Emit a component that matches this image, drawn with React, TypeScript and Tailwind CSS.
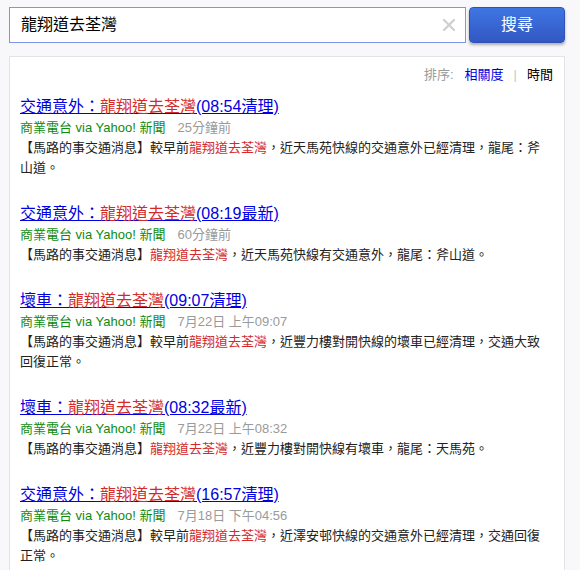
import React from 'react';

interface NewsItem {
  id: number;
  prefix: string;
  suffix: string;
  source: string;
  time: string;
  bodyPre: string;
  bodyPost: string;
}

const KEYWORD = '龍翔道去荃灣';

const items: NewsItem[] = [
  {
    id: 1,
    prefix: '交通意外：',
    suffix: '(08:54清理)',
    source: '商業電台 via Yahoo! 新聞',
    time: '25分鐘前',
    bodyPre: '【馬路的事交通消息】較早前',
    bodyPost: '，近天馬苑快線的交通意外已經清理，龍尾：斧山道。',
  },
  {
    id: 2,
    prefix: '交通意外：',
    suffix: '(08:19最新)',
    source: '商業電台 via Yahoo! 新聞',
    time: '60分鐘前',
    bodyPre: '【馬路的事交通消息】',
    bodyPost: '，近天馬苑快線有交通意外，龍尾：斧山道。',
  },
  {
    id: 3,
    prefix: '壞車：',
    suffix: '(09:07清理)',
    source: '商業電台 via Yahoo! 新聞',
    time: '7月22日 上午09:07',
    bodyPre: '【馬路的事交通消息】較早前',
    bodyPost: '，近豐力樓對開快線的壞車已經清理，交通大致回復正常。',
  },
  {
    id: 4,
    prefix: '壞車：',
    suffix: '(08:32最新)',
    source: '商業電台 via Yahoo! 新聞',
    time: '7月22日 上午08:32',
    bodyPre: '【馬路的事交通消息】',
    bodyPost: '，近豐力樓對開快線有壞車，龍尾：天馬苑。',
  },
  {
    id: 5,
    prefix: '交通意外：',
    suffix: '(16:57清理)',
    source: '商業電台 via Yahoo! 新聞',
    time: '7月18日 下午04:56',
    bodyPre: '【馬路的事交通消息】較早前',
    bodyPost: '，近澤安邨快線的交通意外已經清理，交通回復正常。',
  },
];

const font = { fontFamily: '"Liberation Sans", Arial, "Noto Sans CJK TC", sans-serif' };

const ResultItem: React.FC<{ item: NewsItem }> = ({ item }) => (
  <div className="mb-[25px]">
    <a href="#" className="block text-[16px] leading-[22px] text-[#0000e0] underline decoration-[#0000e0]">
      {item.prefix}
      <span className="text-[#d42a2a]">{KEYWORD}</span>
      {item.suffix}
    </a>
    <div className="text-[13px] leading-[20px]">
      <span className="text-[#108a10]">{item.source}</span>
      <span className="ml-[12px] text-[#9a9a9a]">{item.time}</span>
    </div>
    <p className="text-[13px] leading-[20px] text-[#222]">
      {item.bodyPre}
      <span className="text-[#d42a2a]">{KEYWORD}</span>
      {item.bodyPost}
    </p>
  </div>
);

export default function App() {
  return (
    <div className="w-full h-[570px] overflow-hidden bg-[#f8f8fb] pt-[7px] pl-[9px]" style={font}>
      <div className="flex items-start gap-[3px]">
        <div className="relative w-[457px] h-[36px] bg-white border border-[#7d94e8] flex items-center pl-[11px]">
          <span className="text-[16px] text-black">{KEYWORD}</span>
          <span className="absolute right-[10px] top-1/2 -translate-y-1/2 text-[#cfcfcf]">
            <svg width="12" height="12" viewBox="0 0 12 12">
              <path d="M1 1 L11 11 M11 1 L1 11" stroke="currentColor" strokeWidth="2.2" strokeLinecap="square" />
            </svg>
          </span>
        </div>
        <button className="w-[96px] h-[36px] rounded-[4px] border border-[#2f52b8] bg-gradient-to-b from-[#3f76e2] to-[#3257c3] text-white text-[16px] shadow-[0_2px_3px_rgba(0,0,0,0.3)]">
          搜尋
        </button>
      </div>

      <div className="mt-[13px] w-[556px] bg-white border border-[#e3e3e7] pt-[8px] pl-[10px] pr-[11px]">
        <div className="flex justify-end items-center text-[13px] leading-[20px]">
          <span className="text-[#9a9a9a]">排序:</span>
          <a href="#" className="ml-[11px] text-[#0000e0]">相關度</a>
          <span className="mx-[10px] text-[#c8c8c8]">|</span>
          <span className="text-black">時間</span>
        </div>
        <div className="mt-[11px] pr-[8px]">
          {items.map(item => (
            <ResultItem key={item.id} item={item} />
          ))}
        </div>
      </div>
    </div>
  );
}
